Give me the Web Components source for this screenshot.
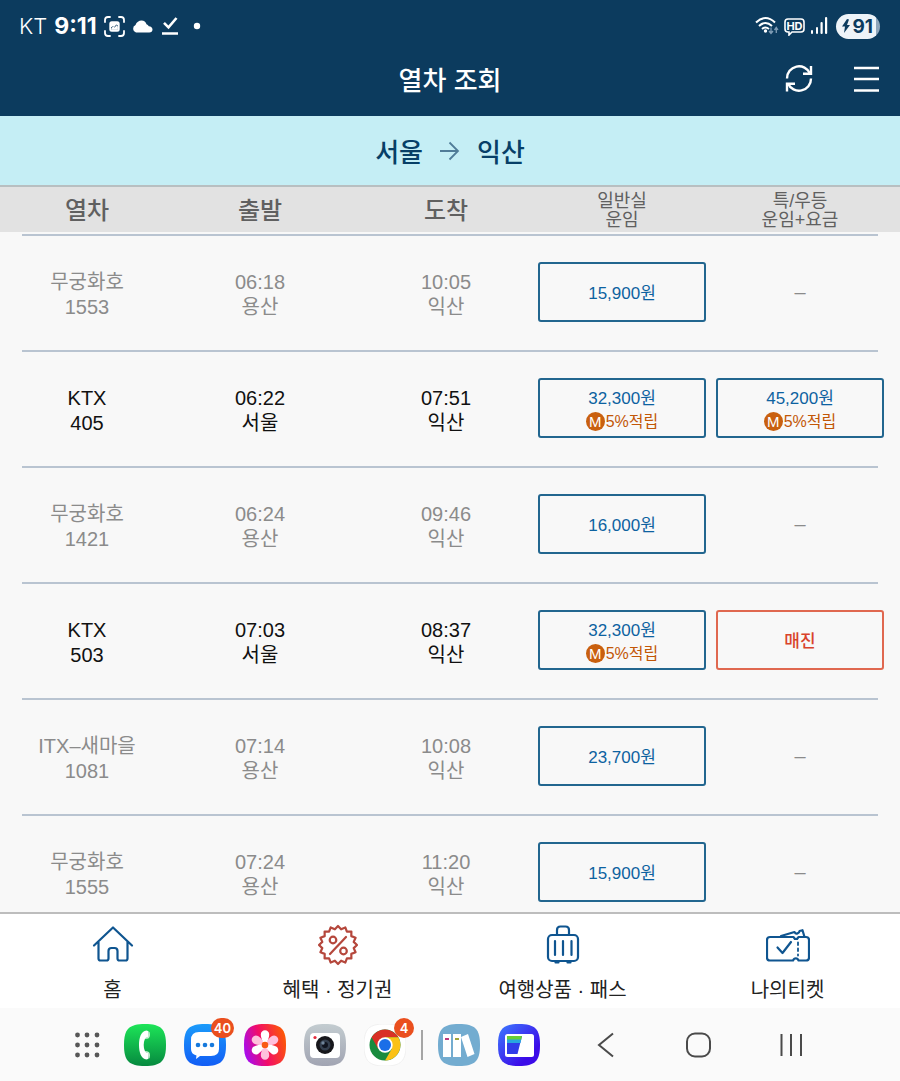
<!DOCTYPE html>
<html lang="ko">
<head>
<meta charset="utf-8">
<meta name="viewport" content="width=device-width, initial-scale=1">
<title>열차 조회</title>
<style>
  body {
    margin: 0;
    font-family: "Liberation Sans", "Noto Sans CJK KR", sans-serif;
    background: #f8f8f8;
  }
</style>
</head>
<body>
<train-app></train-app>

<script>
const define = (name, html, setup) => {
  const template = document.createElement('template');
  template.innerHTML = html;
  customElements.define(name, class extends HTMLElement {
    connectedCallback() {
      if (this.shadowRoot) return;
      this.attachShadow({ mode: 'open' }).append(template.content.cloneNode(true));
      if (setup) setup(this.shadowRoot, this);
    }
  });
};

/* Zigzag outline of the coupon seal */
const seal = Array.from({ length: 32 }, (_, i) => {
  const r = i % 2 ? 16 : 19;
  const a = (i * Math.PI) / 16;
  return (20 + r * Math.sin(a)).toFixed(1) + ',' + (20 - r * Math.cos(a)).toFixed(1);
}).join(' ');

const SQUIRCLE = 'M21 0C37 0 42 5 42 21S37 42 21 42 0 37 0 21 5 0 21 0Z';

define('status-bar', `
  <style>
    :host { display: flex; align-items: center; justify-content: space-between; height: 36px; padding: 8px 20px 0 19px; color: #fff; font-family: Inter, sans-serif; }
    div { display: flex; align-items: center; }
    .left { gap: 7px; }
    .right { gap: 5px; }
    .carrier { font-size: 22px; font-weight: 300; }
    .clock { font-size: 23px; font-weight: 700; }
    .battery { gap: 1px; box-sizing: border-box; height: 25px; padding: 0 7px 0 5px; border-radius: 13px; margin-left: 2px;
      background: linear-gradient(90deg, #eef3f8 91%, #8fa6bb 91%); color: #0c3b5e; font-size: 19px; font-weight: 700; }
    svg { display: block; }
  </style>
  <div class="left">
    <span class="carrier">KT</span>
    <span class="clock">9:11</span>
    <svg width="21" height="21" viewBox="0 0 21 21" fill="none" stroke="#fff" stroke-width="1.800" stroke-linecap="round"><path d="M1 6V4Q1 1 4 1H6M15 1h2q3 0 3 3v2M20 15v2q0 3-3 3h-2M6 20H4q-3 0-3-3v-2"/><path d="M7.800 5.300h5.400q2.500 0 2.500 2.500v5.400q0 2.500-2.500 2.500H7.800q-2.500 0-2.500-2.500V7.800q0-2.500 2.500-2.500zM7 8v5.500h7V9.700l-1.700-1.200-2 2.500-1.600-.8L7 11.500z" fill="#fff" fill-rule="evenodd" stroke="none"/><path d="M7.300 12.300l1.700-1.700 1.700.8 1.800-2.200 1.400 1.300v3.300H7.300z" fill="#fff" stroke="none"/></svg>
    <svg width="21" height="13" viewBox="0 0 21 13"><path d="M4 12.500a4 4 0 0 1-.5-7.500C4.500 2 7 .5 9.500.5c2.600 0 4.400 1.400 5 3.700a4.400 4.400 0 0 1 2.300 2C19 6.200 20.500 7.500 20.500 9.500c0 1.700-1.300 3-3.200 3z" fill="#fff"/></svg>
    <svg width="20" height="20" viewBox="0 0 20 20" fill="none" stroke="#fff" stroke-width="2.600"><path d="M4 6.800l4.500 4.500L16.500 2M2 17.500h16"/></svg>
    <svg width="20" height="8" viewBox="0 0 20 8"><circle cx="10" cy="4" r="3.200" fill="#fff"/></svg>
  </div>
  <div class="right">
    <svg width="24" height="20" viewBox="0 0 24 20" fill="none" stroke="#fff" stroke-width="2"><path d="M1 6.500Q10.500-2.500 20 6.500M4 10Q10.500 4 17 10M7 13Q10.500 10 14 13"/><circle cx="10.500" cy="15" r="1.700" fill="#fff" stroke="none"/><path d="M16 11.500V17M14 15l2 2.500 2-2.500M21.300 17v-5M19.500 14l1.800-2.500L23 14" stroke="#7f9cb5" stroke-width="1.300"/></svg>
    <svg width="21" height="19" viewBox="0 0 21 19" fill="none" stroke="#fff" stroke-width="1.600"><path d="M4 2h13q3 0 3 3v7q0 3-3 3H8l-3 3v-3H4q-3 0-3-3V5q0-3 3-3z"/><text x="10.500" y="12.500" text-anchor="middle" font-family="Inter, sans-serif" font-size="11" font-weight="700" fill="#fff" stroke="none">HD</text></svg>
    <svg width="19" height="18" viewBox="0 0 19 18" fill="#fff"><rect x="1" y="13" width="2" height="4" rx="1"/><rect x="6" y="10" width="2" height="7" rx="1"/><rect x="10.500" y="5" width="2.200" height="12" rx="1"/><rect x="15" y="0" width="2.200" height="17" rx="1"/></svg>
    <div class="battery"><svg width="10" height="14" viewBox="0 0 10 14"><path d="M6 0L1 7.500h3L3 14l6-8H6L8 .5z" fill="#0c3b5e"/></svg><span>91</span></div>
  </div>`);

define('page-header', `
  <style>
    :host { display: grid; grid-template-columns: 1fr auto 1fr; align-items: center; box-sizing: border-box; height: 72px; padding: 0 18px 2px; color: #fff; }
    h1 { grid-column: 2; margin: 0; font-size: 26px; font-weight: 500; font-family: "Noto Sans CJK KR", sans-serif; line-height: 36px; }
    div { display: flex; justify-content: flex-end; gap: 35px; }
    button { display: block; padding: 0; border: 0; background: none; cursor: pointer; }
    svg { display: block; }
  </style>
  <h1><slot></slot></h1>
  <div>
    <button aria-label="새로고침"><svg width="32" height="32" viewBox="0 0 32 32" fill="none" stroke="#fff" stroke-width="2.400"><path d="M4 15.500A12 12 0 0 1 27 10.500M28 15.500A12 12 0 0 1 5 20.500"/><path d="M28 3v7.800h-8M4 28.500v-7.800h8"/></svg></button>
    <button aria-label="메뉴"><svg width="32" height="32" viewBox="0 0 32 32" fill="none" stroke="#fff" stroke-width="2.400"><path d="M4 5h25M4 16h25M4 27.500h25"/></svg></button>
  </div>`);

define('route-bar', `
  <style>
    :host { display: flex; align-items: center; justify-content: center; gap: 16px; height: 69px; background: #c5eef5; border-bottom: 2px solid #b8bfc1; color: #073f67; font: 500 26px/36px "Noto Sans CJK KR", sans-serif; }
    svg { display: block; }
  </style>
  <slot name="from"></slot>
  <svg width="22" height="22" viewBox="0 0 22 22" fill="none" stroke="#507c98" stroke-width="1.800"><path d="M1 11h18M10.500 2.500l8.500 8.500-8.500 8.500"/></svg>
  <slot name="to"></slot>`);

define('fare-button', `
  <style>
    :host { display: block; }
    button { display: block; box-sizing: border-box; width: 100%; height: 60px; padding: 3px 0 0; border: 2px solid #22668f; border-radius: 3px; background: none; color: #0d62a0; font: 17px/24px "Liberation Sans", "Noto Sans CJK KR", sans-serif; cursor: pointer; }
    .mileage { display: none; align-items: center; justify-content: center; gap: 1px; color: #c25707; font-size: 16px; line-height: 22px; }
    :host([mileage]) .mileage { display: flex; }
    b { width: 19px; border-radius: 50%; background: #c9600f; color: #fff; font-size: 15px; font-weight: 400; line-height: 19px; }
    :host([soldout]) button { border-color: #e06850; color: #d9432b; font-weight: 500; cursor: default; }
  </style>
  <button><slot></slot><span class="mileage"><b>M</b><span>5%적립</span></span></button>`,
  (root, host) => { root.querySelector('button').disabled = host.hasAttribute('soldout'); });

const trains = [
  ['무궁화호', '1553', '06:18', '용산', '10:05', '15,900원', '', false],
  ['KTX', '405', '06:22', '서울', '07:51', '32,300원', '45,200원', true],
  ['무궁화호', '1421', '06:24', '용산', '09:46', '16,000원', '', false],
  ['KTX', '503', '07:03', '서울', '08:37', '32,300원', '매진', true],
  ['ITX–새마을', '1081', '07:14', '용산', '10:08', '23,700원', '', false],
  ['무궁화호', '1555', '07:24', '용산', '11:20', '15,900원', '', false]
];
const fare = (text, ktx) => !text ? '–'
  : text === '매진' ? '<fare-button soldout>매진</fare-button>'
  : `<fare-button${ktx ? ' mileage' : ''}>${text}</fare-button>`;

define('train-table', `
  <style>
    :host { display: flex; flex-direction: column; min-height: 0; }
    table { display: flex; flex-direction: column; min-height: 0; }
    thead { display: block; background: #e2e2e2; color: #606060; }
    tbody { display: block; padding-top: 2px; overflow-y: auto; scrollbar-width: none; }
    tr { display: grid; grid-template-columns: 148fr 198fr 174fr 178fr 178fr; align-items: center; padding: 0 11px 0 13px; }
    thead tr { box-sizing: border-box; height: 45px; padding-top: 2px; }
    tbody tr { height: 116px; color: #8b8b8b; background: linear-gradient(#b9c4d1, #b9c4d1) 22px 0 / calc(100% - 44px) 2px no-repeat; }
    tbody tr.ktx { color: #111; }
    th, td { display: block; padding: 5px 0 0; text-align: center; font-weight: 400; font-size: 20px; line-height: 25px; }
    thead th { padding: 0; font-size: 24px; font-weight: 500; line-height: 36px; }
    thead th.small { font-size: 18px; font-weight: 400; line-height: 19px; }
    td.fare { padding: 0 5px; }
  </style>
  <table>
    <thead><tr><th scope="col">열차</th><th scope="col">출발</th><th scope="col">도착</th><th scope="col" class="small">일반실<br>운임</th><th scope="col" class="small">특/우등<br>운임+요금</th></tr></thead>
    <tbody>${trains.map(t => `<tr class="${t[7] ? 'ktx' : ''}"><th scope="row">${t[0]}<br>${t[1]}</th><td>${t[2]}<br>${t[3]}</td><td>${t[4]}<br>익산</td><td class="fare">${fare(t[5], t[7])}</td><td class="fare">${fare(t[6], t[7])}</td></tr>`).join('')}</tbody>
  </table>`);

define('tab-item', `
  <style>
    :host { display: block; }
    a { display: flex; flex-direction: column; align-items: center; gap: 8px; color: #222; text-decoration: none; font-size: 20px; line-height: 30px; }
    ::slotted(svg) { display: block; }
  </style>
  <a href="#"><slot name="icon"></slot><span><slot></slot></span></a>`);

define('tab-bar', `
  <style>
    :host { display: grid; grid-template-columns: repeat(4, 1fr); box-sizing: border-box; height: 96px; padding-top: 9px; background: #fff; border-top: 2px solid #bdbdbd; }
    svg { fill: none; stroke: #0f5590; stroke-width: 2.2; stroke-linecap: round; stroke-linejoin: round; }
  </style>
  <tab-item><svg slot="icon" width="44" height="44" viewBox="0 0 44 44"><path d="M3 22.500L22 4.500l19 18M7.500 19v16.500q0 2 2 2H15.500q2 0 2-2V28q0-3 3-3h3q3 0 3 3v7.500q0 2 2 2h6q2 0 2-2V19"/></svg>홈</tab-item>
  <tab-item><svg slot="icon" width="44" height="44" viewBox="-2 -2 44 44" style="stroke:#b5473c"><polygon points="${seal}"/><path d="M12 29L28 12"/><circle cx="15" cy="15" r="3.300"/><circle cx="25.500" cy="26" r="3.300"/></svg>혜택 · 정기권</tab-item>
  <tab-item><svg slot="icon" width="44" height="44" viewBox="0 0 44 44"><rect x="7" y="12" width="30" height="26" rx="4"/><path d="M16 12V7q0-3.500 3.500-3.500h5Q28 3.500 28 7v5M14 18v14M22 18v14M30.500 18v14M14.500 39.500h3M26.500 39.500h3"/></svg>여행상품 · 패스</tab-item>
  <tab-item><svg slot="icon" width="44" height="44" viewBox="0 0 44 44"><path d="M27.500 14H4q-3 0-3 3v17.500q0 3 3 3H27q.8-2.200 2.800-2.200t2.800 2.200H40q3 0 3-3V17q0-3-3-3H32.500q-.8 2-2.500 2t-2.500-2z"/><path d="M15 13l13.500-4q1 2 3 1.400T33.500 8l3-.8 1.800 6M11.500 24.500l5 5.500 8.500-11"/><path d="M32 19.500v13" stroke-width="1.800" stroke-dasharray="2.500 3.500"/></svg>나의티켓</tab-item>`);

define('dock-app', `
  <style>
    :host { display: block; position: relative; }
    button { display: block; padding: 0; border: 0; background: none; cursor: pointer; }
    span { position: absolute; top: -6px; right: -8px; box-sizing: border-box; min-width: 20px; height: 20px; padding: 0 3px; border-radius: 10px; background: #ea4f1e; color: #fff; font: 600 13px/20px Inter, sans-serif; text-align: center; }
    span:empty { display: none; }
  </style>
  <button><slot></slot></button><span></span>`,
  (root, host) => {
    root.querySelector('span').textContent = host.getAttribute('count') || '';
    root.querySelector('button').setAttribute('aria-label', host.getAttribute('label'));
  });

define('system-dock', `
  <style>
    :host { display: flex; align-items: center; justify-content: space-between; height: 73px; padding: 0 90px 0 68px; background: #fafafa; }
    div { display: flex; align-items: center; gap: 18px; }
    .keys { gap: 52px; }
    i { width: 2px; height: 30px; margin: 0 -3px; background: #a5a5a5; }
    svg { display: block; }
  </style>
  <div>
    <dock-app label="앱 목록"><svg width="38" height="42" viewBox="0 0 38 42" fill="#575757"><circle cx="9.500" cy="11" r="2.400"/><circle cx="19" cy="11" r="2.400"/><circle cx="29" cy="11" r="2.400"/><circle cx="9.500" cy="21" r="2.400"/><circle cx="19" cy="21" r="2.400"/><circle cx="29" cy="21" r="2.400"/><circle cx="9.500" cy="31" r="2.400"/><circle cx="19" cy="31" r="2.400"/><circle cx="29" cy="31" r="2.400"/></svg></dock-app>
    <dock-app label="전화"><svg width="42" height="42" viewBox="0 0 42 42"><linearGradient id="g1" x2="0" y2="1"><stop stop-color="#1de558"/><stop offset="1" stop-color="#06893f"/></linearGradient><path fill="url(#g1)" d="${SQUIRCLE}"/><path fill="#fff" d="M22.500 6.500C17 7 15 14 15 21s2 14 7.500 14.500q2 0 2-2V29q-3-.5-3.800-2.500-1-2.500-1-5.500t1-5.500q.8-2 3.800-2.500V8q0-1.500-2-1.500z"/><path fill="#c5ecd1" d="M20.800 15q.7-2 3.200-2.200L24.500 7q1.500.8 1.500 3.500 0 4-3 4.300zM20.800 27q.7 2 3.200 2.200l.5 5.800q1.500-.8 1.500-3.500 0-4-3-4.300z"/></svg></dock-app>
    <dock-app label="메시지" count="40"><svg width="42" height="42" viewBox="0 0 42 42"><linearGradient id="g2" x2="0" y2="1"><stop stop-color="#1b9bfa"/><stop offset="1" stop-color="#125df5"/></linearGradient><path fill="url(#g2)" d="${SQUIRCLE}"/><path fill="#fff" d="M15 8h12q8 0 8 8v9q0 7-8 7H16l-4 3 .5-3.500Q7 30 7 25v-9q0-8 8-8z"/><g fill="#1679dc"><circle cx="14" cy="21" r="2.300"/><circle cx="21" cy="21" r="2.300"/><circle cx="28" cy="21" r="2.300"/></g></svg></dock-app>
    <dock-app label="갤러리"><svg width="42" height="42" viewBox="0 0 42 42"><linearGradient id="g3" x1="0" y1=".7" x2="1" y2=".4"><stop stop-color="#a30cf5"/><stop offset=".45" stop-color="#f20c68"/><stop offset="1" stop-color="#fc5608"/></linearGradient><path fill="url(#g3)" d="${SQUIRCLE}"/><g fill="#ffc0dc"><path id="p" d="M21 21C18 17 16.800 13 16.800 10.500a4.200 4.200 0 0 1 8.400 0C25.200 13 24 17 21 21z" transform="rotate(60 21 21)"/><path d="M21 21C18 17 16.800 13 16.800 10.500a4.200 4.200 0 0 1 8.400 0C25.200 13 24 17 21 21z" transform="rotate(180 21 21)"/><path d="M21 21C18 17 16.800 13 16.800 10.500a4.200 4.200 0 0 1 8.400 0C25.200 13 24 17 21 21z" transform="rotate(300 21 21)"/></g><g fill="#fff"><path d="M21 22C18 17 16.800 13 16.800 10.500a4.200 4.200 0 0 1 8.400 0C25.200 13 24 17 21 22z"/><path d="M21 22C18 17 16.800 13 16.800 10.500a4.200 4.200 0 0 1 8.400 0C25.200 13 24 17 21 22z" transform="rotate(120 21 21)"/><path d="M21 22C18 17 16.800 13 16.800 10.500a4.200 4.200 0 0 1 8.400 0C25.200 13 24 17 21 22z" transform="rotate(240 21 21)"/></g><circle cx="21" cy="21" r="3.300" fill="#f95b14"/></svg></dock-app>
    <dock-app label="카메라"><svg width="42" height="42" viewBox="0 0 42 42"><linearGradient id="g4" x2="0" y2="1"><stop stop-color="#c3ccd0"/><stop offset="1" stop-color="#a1a4b2"/></linearGradient><path fill="url(#g4)" d="${SQUIRCLE}"/><rect x="6" y="9" width="30" height="25" rx="4" fill="#fff"/><circle cx="11" cy="13.500" r="1.600" fill="#e32b3d"/><circle cx="21" cy="21" r="9" fill="#17171b"/><circle cx="21" cy="21" r="5.500" fill="#343f4e"/><circle cx="21" cy="21" r="3" fill="#11151f"/><circle cx="19" cy="19" r="1.700" fill="#71869b"/></svg></dock-app>
    <dock-app label="Chrome" count="4"><svg width="42" height="42" viewBox="0 0 42 42"><path fill="#fff" stroke="#eee" stroke-width=".8" d="${SQUIRCLE}"/><circle cx="21" cy="21" r="15.500" fill="#198b3e"/><path fill="#d93025" d="M7.600 13.300A15.500 15.500 0 0 1 34.400 13.300H21L14.300 24.900z"/><path fill="#fbc116" d="M34.400 13.300A15.500 15.500 0 0 1 21 36.500L27.700 24.900 21 13.300z"/><circle cx="21" cy="21" r="7.700" fill="#fff"/><circle cx="21" cy="21" r="6" fill="#1a6ee8"/></svg></dock-app>
    <i></i>
    <dock-app label="전자책"><svg width="42" height="42" viewBox="0 0 42 42"><path fill="#73acd0" d="${SQUIRCLE}"/><path fill="#fff" d="M5 10h8v23H5zM15 10h8v23h-8zM23 13l7-3 6.500 20-7 3z"/><path fill="#bd387c" d="M7 14h4v2H7z"/><path fill="#a2a53a" d="M17 14h4v2h-4z"/></svg></dock-app>
    <dock-app label="지갑"><svg width="42" height="42" viewBox="0 0 42 42"><linearGradient id="g5" x2="1" y2="1"><stop stop-color="#3d7bff"/><stop offset=".75" stop-color="#3b0be8"/></linearGradient><path fill="url(#g5)" d="${SQUIRCLE}"/><rect x="7" y="10" width="29" height="23" rx="2.500" fill="#fff"/><path fill="#303be9" d="M9 12h15l-4.500 18H9z"/><path fill="#27a6df" d="M9 15h14.300l-.8 4H9z"/><path fill="#67cf34" d="M9 12h15l-.8 3.500H9z"/></svg></dock-app>
  </div>
  <div class="keys">
    <dock-app label="뒤로"><svg width="40" height="42" viewBox="0 0 40 42" fill="none" stroke="#4a4a4a" stroke-width="2"><path d="M27 9.500L13 21l14 11.500"/></svg></dock-app>
    <dock-app label="홈 화면"><svg width="40" height="42" viewBox="0 0 40 42" fill="none" stroke="#4a4a4a" stroke-width="2"><rect x="9" y="9.500" width="23" height="23" rx="8"/></svg></dock-app>
    <dock-app label="최근 앱"><svg width="40" height="42" viewBox="0 0 40 42" fill="none" stroke="#4a4a4a" stroke-width="2"><path d="M11.500 10v22M21 10v22M31 10v22"/></svg></dock-app>
  </div>`);

define('train-app', `
  <style>
    :host { display: flex; flex-direction: column; height: 100vh; }
    header { background: #0c3b5e; }
    train-table { flex: 1; }
  </style>
  <header><status-bar></status-bar><page-header>열차 조회</page-header></header>
  <route-bar><span slot="from">서울</span><span slot="to">익산</span></route-bar>
  <train-table></train-table>
  <tab-bar></tab-bar>
  <system-dock></system-dock>`);
</script>
</body>
</html>
